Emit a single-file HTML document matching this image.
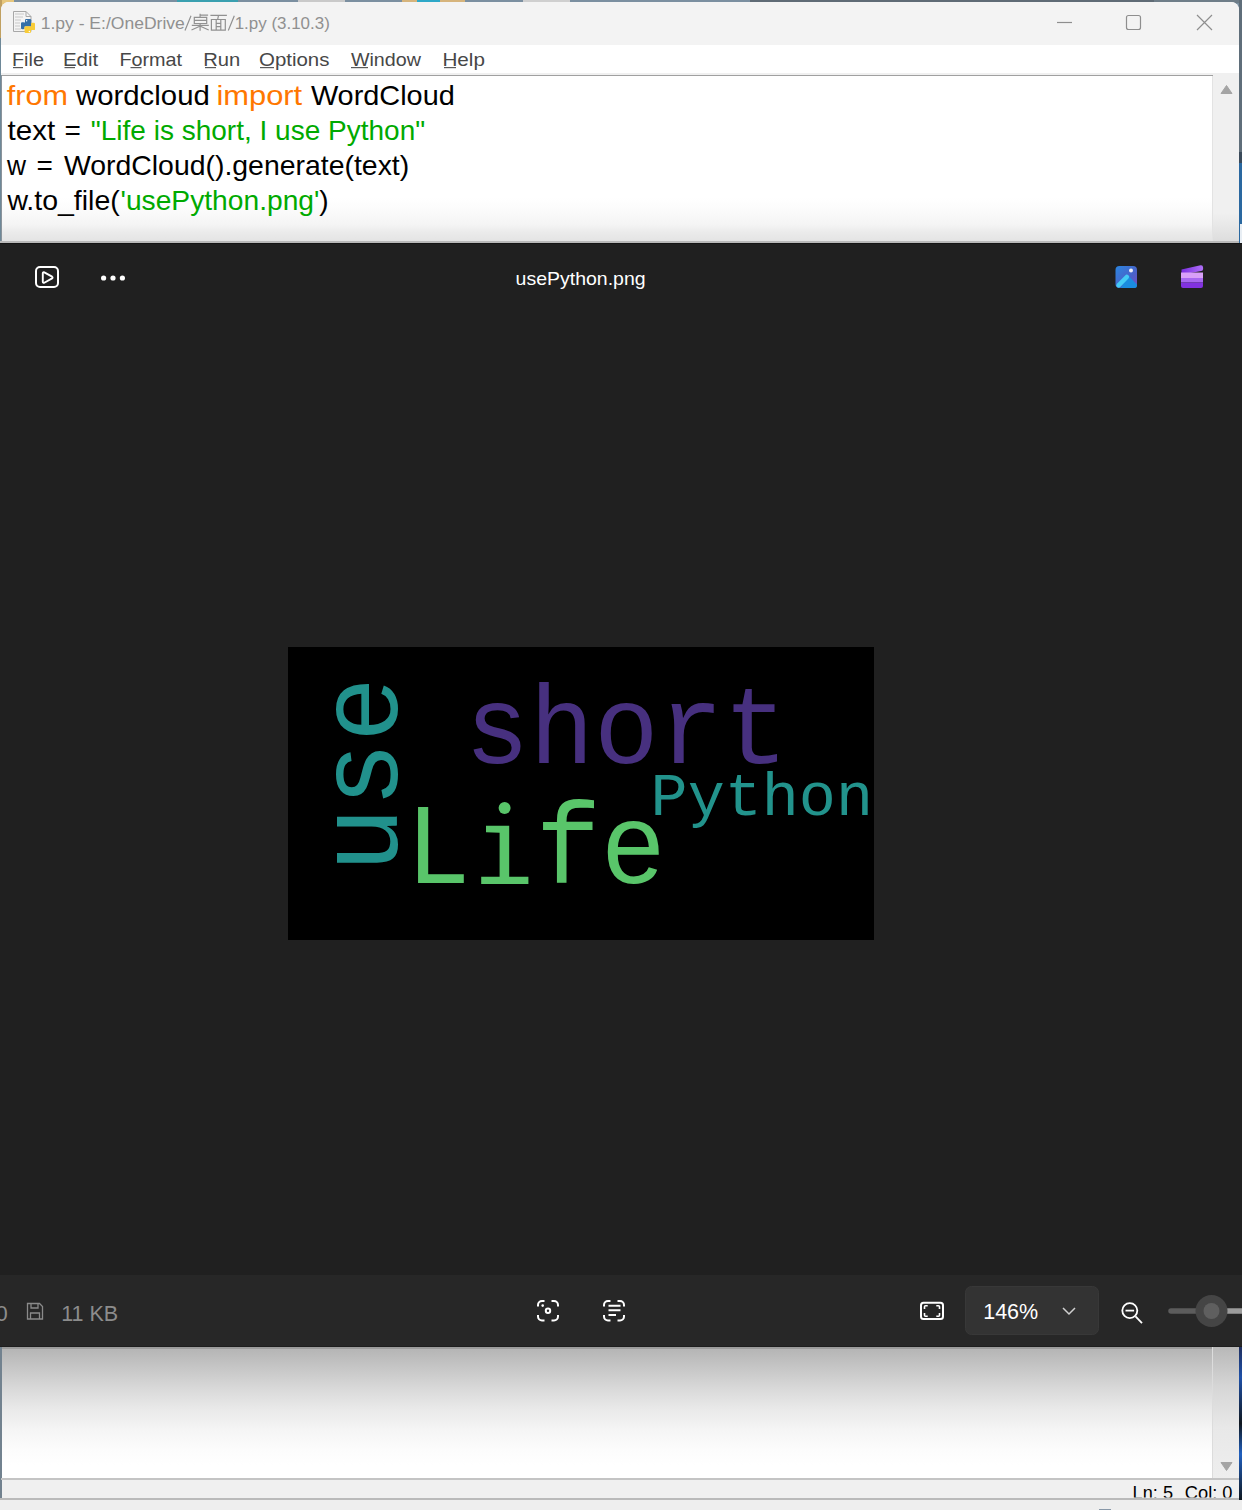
<!DOCTYPE html>
<html><head><meta charset="utf-8">
<style>
*{margin:0;padding:0;box-sizing:border-box}
html,body{width:1242px;height:1510px;overflow:hidden;background:#7b8fa0;font-family:"Liberation Sans",sans-serif}
.abs{position:absolute}
svg{position:absolute;left:0;top:0;overflow:visible}
</style></head><body>
<!-- desktop strip -->
<div class="abs" style="left:0;top:0;width:1242px;height:3px;background:#7b8fa0"></div>
<div class="abs" style="left:0;top:0;width:14px;height:12px;background:#e6c67c"></div>
<div class="abs" style="left:0;top:0;width:2px;height:38px;background:#c0a060"></div>
<div class="abs" style="left:177px;top:0;width:61px;height:3px;background:#3aa0b0"></div>
<div class="abs" style="left:298px;top:0;width:47px;height:3px;background:#c9c9c9"></div>
<div class="abs" style="left:402px;top:0;width:63px;height:3px;background:#d6b47c"></div>
<div class="abs" style="left:417px;top:0;width:23px;height:3px;background:#2ea8c8"></div>
<div class="abs" style="left:523px;top:0;width:47px;height:3px;background:#cfcfcf"></div>
<div class="abs" style="left:750px;top:0;width:404px;height:3px;background:#5f6b75"></div>
<div class="abs" style="left:1154px;top:0;width:88px;height:3px;background:#6e7d88"></div>
<div class="abs" style="left:1239px;top:0;width:3px;height:1510px;background:#5f6e7a"></div>
<div class="abs" style="left:1239px;top:152px;width:3px;height:11px;background:#3a4a5a"></div>
<div class="abs" style="left:1239px;top:163px;width:3px;height:80px;background:#2a68a0"></div>
<div class="abs" style="left:1240px;top:224px;width:2px;height:19px;background:#e8eef4"></div>
<div class="abs" style="left:0;top:38px;width:1px;height:1472px;background:#6e8898"></div>

<!-- IDLE window top -->
<div class="abs" style="left:1px;top:2px;width:1238px;height:241px;background:#fff;border-radius:8px 8px 0 0;overflow:hidden">
  <div class="abs" style="left:0;top:0;width:1238px;height:43px;background:#f3f3f3"></div>
</div>
<!-- title icon -->
<svg width="1242" height="50" viewBox="0 0 1242 50">
  <path d="M13.5 11.5 H26 L31 16.5 V31.5 H13.5 Z" fill="#f4f4f4" stroke="#a8a8a8" stroke-width="1"/>
  <path d="M26 11.5 V16.5 H31" fill="none" stroke="#a8a8a8" stroke-width="1"/>
  <path d="M15 14h9M15 17h8M15 20h6M15 23h5M15 26h5M15 29h6" stroke="#c8c8c8" stroke-width="1"/>
  <g fill="#3570a8">
    <rect x="25" y="19" width="6.2" height="5" rx="1.2"/>
    <rect x="21" y="22.6" width="10.2" height="3.9" rx="1"/>
    <rect x="21" y="22.6" width="3.6" height="6.6" rx="1.2"/>
  </g>
  <circle cx="26.6" cy="20.7" r="0.75" fill="#fff"/>
  <g fill="#f8cc38">
    <rect x="31" y="22.8" width="4" height="7.2" rx="1.2"/>
    <rect x="24.6" y="26.6" width="10.4" height="3.4" rx="1"/>
    <rect x="24.6" y="26.6" width="6.4" height="6.4" rx="1.2"/>
  </g>
  <circle cx="29.4" cy="31.4" r="0.75" fill="#fff"/>
  <!-- window controls -->
  <path d="M1057 22.5h15" stroke="#8e8e8e" stroke-width="1.2"/>
  <rect x="1126.5" y="15.5" width="14" height="14" rx="2" fill="none" stroke="#8e8e8e" stroke-width="1.2"/>
  <path d="M1197 15l15 15M1212 15l-15 15" stroke="#8e8e8e" stroke-width="1.2"/>
</svg>
<svg width="1242" height="80" viewBox="0 0 1242 80">
  <g font-family="Liberation Sans" font-size="17" fill="#909090">
    <text x="40.7" y="28.8" textLength="144.1" lengthAdjust="spacingAndGlyphs">1.py - E:/OneDrive</text>
    <text x="234.7" y="28.8" textLength="95.1" lengthAdjust="spacingAndGlyphs">1.py (3.10.3)</text>
  </g>
  <g stroke="#919191" stroke-width="1.2" fill="none">
    <path d="M191 15.8L185 30.6M234.3 15.8L228.3 30.6"/>
    <path d="M200.1 13.8v3.5M200.1 15.2h8M194.3 17.4h12.4v6.1h-12.4zM194.3 20.3h12.4M191.8 25.3h17M200.1 23.5v7.2M199.8 26.2l-8.3 3.8M200.4 26.2l8.3 3.8"/>
    <path d="M210.4 15.4h16.5M218.5 15.4l-0.8 4M211.4 19.5h13.9v10.6h-13.9zM216.2 19.5v10.6M220.8 19.5v10.6M216.2 23.3h4.6M216.2 26.7h4.6"/>
  </g>
  <g font-family="Liberation Sans" font-size="19" fill="#474747">
    <text x="12" y="66" textLength="31.9" lengthAdjust="spacingAndGlyphs">File</text>
    <text x="62.9" y="66" textLength="35.3" lengthAdjust="spacingAndGlyphs">Edit</text>
    <text x="119.4" y="66" textLength="62.7" lengthAdjust="spacingAndGlyphs">Format</text>
    <text x="203.2" y="66" textLength="37" lengthAdjust="spacingAndGlyphs">Run</text>
    <text x="259" y="66" textLength="70.4" lengthAdjust="spacingAndGlyphs">Options</text>
    <text x="350.9" y="66" textLength="70" lengthAdjust="spacingAndGlyphs">Window</text>
    <text x="442.4" y="66" textLength="42.5" lengthAdjust="spacingAndGlyphs">Help</text>
  </g>
  <g fill="#5a5a5a">
    <rect x="13" y="67" width="10" height="1.2"/>
    <rect x="64.5" y="67" width="10.5" height="1.2"/>
    <rect x="130.5" y="67" width="11" height="1.2"/>
    <rect x="205" y="67" width="11" height="1.2"/>
    <rect x="260" y="67" width="14" height="1.2"/>
    <rect x="351" y="67" width="17" height="1.2"/>
    <rect x="444" y="67" width="12" height="1.2"/>
  </g>
</svg>
<!-- editor -->
<div class="abs" style="left:1px;top:73px;width:1212px;height:2px;background:#f0f0f0"></div>
<div class="abs" style="left:1px;top:75px;width:1212px;height:1px;background:#a0a0a0"></div>
<div class="abs" style="left:1px;top:75px;width:1px;height:168px;background:#8a939b"></div>
<div class="abs" style="left:1213px;top:73px;width:26px;height:170px;background:linear-gradient(#f0f0f0 0,#f0f0f0 140px,#dcdcdc 170px)"></div>
<div class="abs" style="left:1212px;top:76px;width:1px;height:167px;background:#e3e3e3"></div>
<div class="abs" style="left:2px;top:198px;width:1210px;height:43px;background:linear-gradient(#ffffff 0,#fbfbfb 12px,#f4f4f4 27px,#ebebeb 34px,#e4e4e4 43px)"></div>
<svg width="1242" height="250" viewBox="0 0 1242 250">
  <path d="M1221 93.5l5.5-8 5.5 8z" fill="#a4a4a4" stroke="#a4a4a4" stroke-width="1" stroke-linejoin="round"/>
  <g font-family="Liberation Sans" font-size="28" lengthAdjust="spacingAndGlyphs">
    <text x="6.8" y="105.1" fill="#ff7700" textLength="61.2" lengthAdjust="spacingAndGlyphs">from</text>
    <text x="76" y="105.1" fill="#000" textLength="133.8" lengthAdjust="spacingAndGlyphs">wordcloud</text>
    <text x="216.4" y="105.1" fill="#ff7700" textLength="85.8" lengthAdjust="spacingAndGlyphs">import</text>
    <text x="310.9" y="105.1" fill="#000" textLength="143.9" lengthAdjust="spacingAndGlyphs">WordCloud</text>
    <text x="7.6" y="139.7" fill="#000" textLength="47.6" lengthAdjust="spacingAndGlyphs">text</text>
    <text x="64.6" y="139.7" fill="#000">=</text>
    <text x="90.8" y="139.7" fill="#00aa00" textLength="334.4" lengthAdjust="spacingAndGlyphs">"Life is short, I use Python"</text>
    <text x="6.9" y="175" fill="#000" textLength="19" lengthAdjust="spacingAndGlyphs">w</text>
    <text x="36.6" y="175" fill="#000">=</text>
    <text x="63.9" y="175" fill="#000" textLength="345.3" lengthAdjust="spacingAndGlyphs">WordCloud().generate(text)</text>
    <text x="7.4" y="209.8" fill="#000" textLength="112.3" lengthAdjust="spacingAndGlyphs">w.to_file(</text>
    <text x="120.5" y="209.8" fill="#00aa00" textLength="198.9" lengthAdjust="spacingAndGlyphs">'usePython.png'</text>
    <text x="319.3" y="209.8" fill="#000">)</text>
  </g>
</svg>

<!-- Photos viewer -->
<div class="abs" style="left:0;top:241px;width:1239px;height:2px;background:#b9b9b9"></div>
<div class="abs" style="left:0;top:243px;width:1242px;height:1032px;background:#202020"></div>
<div class="abs" style="left:0;top:243px;width:1242px;height:1px;background:#151515"></div>
<div class="abs" style="left:0;top:1275px;width:1242px;height:72px;background:#272727"></div>
<div class="abs" style="left:288px;top:647px;width:586px;height:293px;background:#000"></div>
<svg width="1242" height="1510" viewBox="0 0 1242 1510">
  <!-- top toolbar -->
  <rect x="36" y="267" width="22" height="20" rx="4" fill="none" stroke="#fff" stroke-width="2"/>
  <path d="M42.8 273.2v8.6a1 1 0 0 0 1.5 0.9l7.8-4.3a1 1 0 0 0 0-1.7l-7.8-4.4a1 1 0 0 0-1.5 0.9z" fill="none" stroke="#fff" stroke-width="1.9" stroke-linejoin="round"/>
  <circle cx="103.6" cy="278" r="2.6" fill="#fff"/>
  <circle cx="113" cy="278" r="2.6" fill="#fff"/>
  <circle cx="122.4" cy="278" r="2.6" fill="#fff"/>
  <text x="515.6" y="285.4" font-family="Liberation Sans" font-size="19" fill="#fff" textLength="130" lengthAdjust="spacingAndGlyphs">usePython.png</text>
  <defs>
    <linearGradient id="ph" x1="0" y1="0" x2="1" y2="1">
      <stop offset="0" stop-color="#2a86e0"/><stop offset="0.6" stop-color="#4a62c8"/><stop offset="1" stop-color="#7a4cc0"/>
    </linearGradient>
    <linearGradient id="cc1" x1="0" y1="0" x2="1" y2="0">
      <stop offset="0" stop-color="#7a2ee0"/><stop offset="1" stop-color="#b070f8"/>
    </linearGradient>
  </defs>
  <rect x="1115.5" y="266" width="21.5" height="22" rx="4" fill="url(#ph)"/>
  <path d="M1121 288 l6-6.5 a1.5 1.5 0 0 1 2.2 0 l6.6 6.5z" fill="#1a8ce0"/>
  <path d="M1126.5 276.5 a1.8 1.8 0 0 1 2.6 0 l7.9 8 v1 a2.5 2.5 0 0 1-2.5 2.5 h-13.5z" fill="#1a8ce0"/>
  <path d="M1118.6 285.4 l8.2-8.4" stroke="#44ccf6" stroke-width="4.6" stroke-linecap="round"/>
  <circle cx="1131" cy="270.6" r="2" fill="#f0f0f8"/>
  <path d="M1181.5 269.5 l19-4.2 a2.3 2.3 0 0 1 2.6 2.2 v1.5 a2 2 0 0 1-2 2 l-19.6 3.8z" fill="url(#cc1)"/>
  <rect x="1181" y="272.5" width="22" height="5.5" fill="#d8a0f8"/>
  <rect x="1181" y="278" width="22" height="4.5" fill="#a868f0"/>
  <path d="M1181 282.5h22v3.5a2 2 0 0 1-2 2h-18a2 2 0 0 1-2-2z" fill="#8232e0"/>
  <!-- wordcloud -->
  <g font-family="Liberation Mono" font-size="100">
    <text transform="matrix(1.0774 0 0 1.1170 464.81 763.28)" fill="#47307f">short</text>
    <text transform="matrix(0.6179 0 0 0.6155 650.56 815.23)" fill="#22938c">Python</text>
    <text transform="matrix(1.0847 0 0 1.1456 405.53 883.05)" fill="#59c56a">Life</text>
    <text transform="matrix(0 -1.0875 1.1324 0 396.77 872.49)" fill="#21918c">use</text>
  </g>
  <rect x="470" y="795" width="67" height="95" fill="#000"/>
  <g fill="#59c56a">
    <circle cx="504.6" cy="808" r="6"/>
    <path d="M486 825.8h23.2v51h19.2v7.2h-47.2v-7.2h18.4v-44l-13.6-0.6z"/>
  </g>
  <!-- bottom bar -->
  <text x="-4.5" y="1320.8" font-family="Liberation Sans" font-size="22" fill="#8c8c8c">0</text>
  <path d="M27.5 1303.5h12l3 3v12.5h-15z M31 1303.5v4.5h7v-4.5 M30.5 1319v-6h9v6" fill="none" stroke="#8a8a8a" stroke-width="1.3"/>
  <text x="61.2" y="1320.8" font-family="Liberation Sans" font-size="22" fill="#8c8c8c" textLength="57" lengthAdjust="spacingAndGlyphs">11 KB</text>
  <g fill="none" stroke="#fff" stroke-width="2" stroke-linecap="butt">
    <path d="M538 1306.5v-1.5a4 4 0 0 1 4-4h2.5 M551.5 1301h2.5a4 4 0 0 1 4 4v1.5 M558 1315v1.5a4 4 0 0 1-4 4h-2.5 M544.5 1320.5h-2.5a4 4 0 0 1-4-4v-1.5"/>
    <circle cx="548" cy="1310.8" r="2.2"/>
    <path d="M604 1306.5v-1.5a4 4 0 0 1 4-4h2.5 M617.5 1301h2.5a4 4 0 0 1 4 4v1.5 M624 1315v1.5a4 4 0 0 1-4 4h-2.5 M610.5 1320.5h-2.5a4 4 0 0 1-4-4v-1.5"/>
    <path d="M608.5 1305.8h12 M608.5 1310.2h12 M608.5 1315h7.5"/>
    <rect x="921" y="1302.8" width="22" height="16.2" rx="2.5"/>
  </g>
  <circle cx="542.7" cy="1305.6" r="1.3" fill="#fff"/>
  <g fill="none" stroke="#fff" stroke-width="1.6">
    <path d="M924.5 1309v-2.2a1 1 0 0 1 1-1h2.2 M936.3 1305.8h2.2a1 1 0 0 1 1 1v2.2 M939.5 1313v2.2a1 1 0 0 1-1 1h-2.2 M927.7 1316.2h-2.2a1 1 0 0 1-1-1v-2.2"/>
  </g>
  <rect x="965.5" y="1286.5" width="133" height="48" rx="6" fill="#333333" stroke="#383838" stroke-width="1"/>
  <text x="983.2" y="1319" font-family="Liberation Sans" font-size="22" fill="#fff" textLength="55" lengthAdjust="spacingAndGlyphs">146%</text>
  <path d="M1063 1308l6 6 6-6" fill="none" stroke="#d0d0d0" stroke-width="1.5"/>
  <circle cx="1129.8" cy="1310.6" r="7.5" fill="none" stroke="#fff" stroke-width="1.8"/>
  <path d="M1125.5 1310.6h8.6" stroke="#fff" stroke-width="1.8"/>
  <path d="M1135.5 1316.3l6.5 6.8" stroke="#fff" stroke-width="1.8"/>
  <path d="M1171 1311h42" stroke="#5c5c5c" stroke-width="5.5" stroke-linecap="round"/>
  <path d="M1213 1311h30" stroke="#9c9c9c" stroke-width="5.5"/>
  <circle cx="1211.5" cy="1311" r="16" fill="#454545"/>
  <circle cx="1211.5" cy="1311" r="8" fill="#5f5f5f"/>
</svg>

<!-- IDLE shell window bottom -->
<div class="abs" style="left:0;top:1347px;width:1239px;height:163px;background:#f0f0f0"></div>
<div class="abs" style="left:0;top:1347px;width:2px;height:152px;background:#72828f"></div>
<div class="abs" style="left:2px;top:1349px;width:1210px;height:129px;background:linear-gradient(#b5b5b5 0,#c8c8c8 21px,#dadada 41px,#eaeaea 61px,#f5f5f5 81px,#fcfcfc 101px,#ffffff 116px)"></div>
<div class="abs" style="left:0;top:1346px;width:1242px;height:1px;background:#1e1e1e"></div>
<div class="abs" style="left:2px;top:1347px;width:1237px;height:2px;background:#9c9c9c"></div>
<div class="abs" style="left:1212px;top:1347px;width:1px;height:132px;background:#dcdcdc"></div>
<div class="abs" style="left:1213px;top:1347px;width:26px;height:132px;background:linear-gradient(#b8b8b8 0,#d6d6d6 40px,#e8e8e8 80px,#eeeeee 132px)"></div>
<div class="abs" style="left:1px;top:1478px;width:1238px;height:2px;background:#c4c4c4"></div>
<div class="abs" style="left:0;top:1498px;width:1242px;height:2px;background:#bababa"></div>
<div class="abs" style="left:0;top:1500px;width:1242px;height:10px;background:#eeeeee"></div>
<div class="abs" style="left:1099px;top:1509px;width:12px;height:1px;background:#8898a8"></div>
<svg width="1242" height="1510" viewBox="0 0 1242 1510">
  <path d="M1221 1462.5h11l-5.5 8z" fill="#a4a4a4" stroke="#a4a4a4" stroke-width="1" stroke-linejoin="round"/>
  <defs><clipPath id="stc"><rect x="0" y="1480" width="1242" height="17.5"/></clipPath></defs>
  <g font-family="Liberation Sans" font-size="19" fill="#000" clip-path="url(#stc)"><text x="1132.6" y="1499.3" textLength="40.4" lengthAdjust="spacingAndGlyphs">Ln: 5</text><text x="1184.8" y="1499.3" textLength="47.7" lengthAdjust="spacingAndGlyphs">Col: 0</text></g>
</svg>
<div class="abs" style="left:1239px;top:1347px;width:3px;height:153px;background:linear-gradient(#203060,#1e50a8 20%,#101820 50%,#2060c0 70%,#101820 100%)"></div>
</body></html>
